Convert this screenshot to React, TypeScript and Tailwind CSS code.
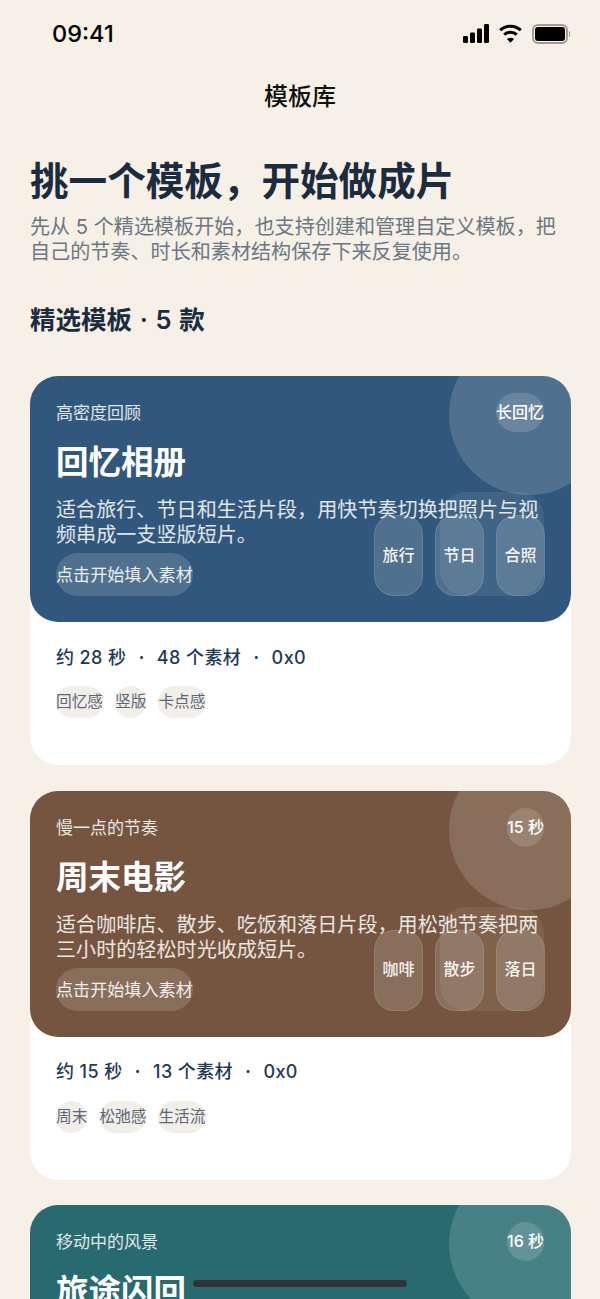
const F = "font-['Inter','Noto_Sans_CJK_SC','Noto_Sans',sans-serif]";

type Card = {
  color: string;
  eyebrow: string;
  badge: string;
  title: string;
  desc?: [string, string];
  tiles?: [string, string, string];
  meta?: [string, string];
  tags?: string[];
};

const cards: Card[] = [
  {
    color: "bg-[#31587c]",
    eyebrow: "高密度回顾",
    badge: "长回忆",
    title: "回忆相册",
    desc: ["适合旅行、节日和生活片段，用快节奏切换把照片与视", "频串成一支竖版短片。"],
    tiles: ["旅行", "节日", "合照"],
    meta: ["约 28 秒", "48 个素材"],
    tags: ["回忆感", "竖版", "卡点感"],
  },
  {
    color: "bg-[#75553f]",
    eyebrow: "慢一点的节奏",
    badge: "15 秒",
    title: "周末电影",
    desc: ["适合咖啡店、散步、吃饭和落日片段，用松弛节奏把两", "三小时的轻松时光收成短片。"],
    tiles: ["咖啡", "散步", "落日"],
    meta: ["约 15 秒", "13 个素材"],
    tags: ["周末", "松弛感", "生活流"],
  },
  {
    color: "bg-[#276a70]",
    eyebrow: "移动中的风景",
    badge: "16 秒",
    title: "旅途闪回",
  },
];

function StatusIcons() {
  return (
    <div className="flex items-center gap-[10px]">
      <svg width="26" height="19" viewBox="0 0 26 19" fill="#000">
        <rect x="0" y="12" width="5" height="7" rx="1.3" />
        <rect x="7" y="8.500" width="5" height="10.500" rx="1.3" />
        <rect x="14" y="4.500" width="5" height="14.500" rx="1.3" />
        <rect x="21" y="0" width="5" height="19" rx="1.3" />
      </svg>
      <svg width="23" height="19" viewBox="0 0 23 19" fill="none" stroke="#000" strokeWidth="3">
        <path d="M1.200 6.200C7 .8 16 .8 21.800 6.200" />
        <path d="M5.200 10.600c3.600-3.200 9-3.200 12.600 0" />
        <path d="M11.500 18.800 7.900 14.900c2-1.700 5.200-1.700 7.200 0z" fill="#000" stroke="none" />
      </svg>
      <div className="flex items-center gap-[1px]">
        <div className="h-[20px] w-[36px] rounded-[6px] border-2 border-[#a09c94] p-[1px]">
          <div className="h-full w-full rounded-[3px] bg-black" />
        </div>
        <div className="h-[6px] w-[1.500px] rounded-r-sm bg-[#a09c94]" />
      </div>
    </div>
  );
}

function TemplateCard({ card }: { card: Card }) {
  return (
    <div className="h-[389px] shrink-0 rounded-[28px] bg-white">
      <div className={`relative h-[246px] overflow-hidden rounded-[28px] px-[26px] pt-[17px] ${card.color}`}>
        <div className="absolute top-[-41px] right-[-38px] h-[160px] w-[160px] rounded-full bg-white/15" />
        <div className="absolute top-[116px] right-[27px] h-[104px] w-[104px] rounded-[26px] bg-white/[0.07]" />
        <div className="relative flex items-center justify-between pr-px">
          <div className="pt-[2px] text-[17px] leading-[37px] text-white/85">{card.eyebrow}</div>
          <div className="rounded-full bg-white/15 text-[16px] leading-[39px] font-medium text-white">{card.badge}</div>
        </div>
        <div className="relative mt-[8px] text-[32.500px] leading-[46px] font-semibold text-white">{card.title}</div>
        {card.desc && (
          <div className="relative mt-[12px] text-[20.100px] leading-[25px] whitespace-nowrap text-white/85">
            <div>{card.desc[0]}</div>
            <div>{card.desc[1]}</div>
          </div>
        )}
        {card.desc && (
          <div className="relative mt-[5px] w-fit rounded-full bg-white/15 text-[17.100px] leading-[43px] text-white/90">
            点击开始填入素材
          </div>
        )}
        {card.tiles && (
          <div className="absolute right-[26px] bottom-[26px] flex gap-[12px]">
            {card.tiles.map((t) => (
              <div
                key={t}
                className="flex h-[81px] w-[49px] items-center justify-center rounded-[20px] border border-white/10 bg-white/15 pb-[2px] text-[16px] font-medium text-white/95"
              >
                {t}
              </div>
            ))}
          </div>
        )}
      </div>
      {card.meta && (
        <div className="px-[26px]">
          <div className="mt-[21px] flex h-[28px] items-center gap-[12px] text-[18px] font-medium tracking-[0.4px] text-[#1f3a57]">
            <span>{card.meta[0]}</span>
            <span className="font-bold">·</span>
            <span>{card.meta[1]}</span>
            <span className="font-bold">·</span>
            <span>0x0</span>
          </div>
          <div className="mt-[15px] flex gap-[12px]">
            {card.tags?.map((t) => (
              <div key={t} className="rounded-full bg-[#f2eee8] text-[15.700px] leading-[32px] text-[#5c6878]">
                {t}
              </div>
            ))}
          </div>
        </div>
      )}
    </div>
  );
}

export default function App() {
  return (
    <div className={`relative h-[1299px] w-[600px] overflow-hidden bg-[#f6f0e6] ${F}`}>
      <div className="flex h-[66px] items-center justify-between pt-[1px] pr-[30px] pl-[52px]">
        <div className="text-[23.500px] font-medium text-black">09:41</div>
        <StatusIcons />
      </div>
      <div className="mt-[13px] text-center text-[24px] leading-[36px] font-medium text-[#111]">模板库</div>
      <div className="pr-[29px] pl-[30px]">
        <h1 className="mt-[39px] text-[38.600px] leading-[54px] font-bold text-[#1b2c3f]">挑一个模板，开始做成片</h1>
        <div className="mt-[7px] text-[20.100px] leading-[25px] whitespace-nowrap text-[#6b7785]">
          <div>先从 5 个精选模板开始，也支持创建和管理自定义模板，把</div>
          <div>自己的节奏、时长和素材结构保存下来反复使用。</div>
        </div>
        <h2 className="mt-[35px] text-[25.500px] leading-[40px] font-semibold [word-spacing:1.300px] text-[#1b2c3f]">精选模板 · 5 款</h2>
        <div className="mt-[36px] flex flex-col gap-[25.500px]">
          {cards.map((c) => (
            <TemplateCard key={c.title} card={c} />
          ))}
        </div>
      </div>
      <div className="absolute bottom-[12px] left-[193px] h-[7px] w-[214px] rounded-full bg-[#333]" />
    </div>
  );
}
